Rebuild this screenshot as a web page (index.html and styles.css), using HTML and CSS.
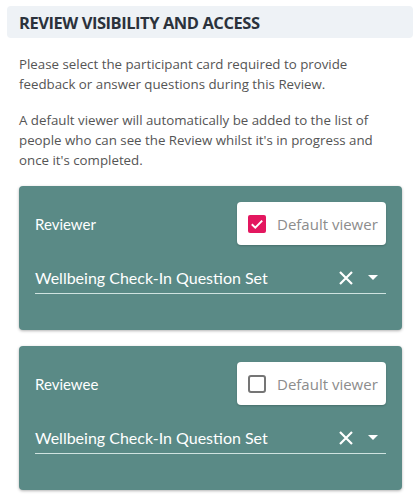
FILE: index.html
```html
<!DOCTYPE html>
<html>
<head>
<meta charset="utf-8">
<link rel="stylesheet" href="styles.css">
</head>
<body>
<div class="header"><h1 class="title">REVIEW VISIBILITY AND ACCESS</h1></div>
<p class="text">Please select the participant card required to provide feedback or answer questions during this Review.</p>
<p class="text">A default viewer will automatically be added to the list of people who can see the Review whilst it's in progress and once it's completed.</p>

<div class="card">
  <div class="row">
    <span class="label">Reviewer</span>
    <label class="dv">
      <svg class="cb" width="18" height="18" viewBox="0 0 18 18"><rect x="0" y="0" width="18" height="18" rx="2" fill="#e3175f"/><path d="M3.8 9.2 L7.3 12.6 L14.2 5.6" fill="none" stroke="#fff" stroke-width="2"/></svg>
      <span class="dv-text">Default viewer</span>
    </label>
  </div>
  <div class="select">
    <span class="value">Wellbeing Check-In Question Set</span>
    <svg class="x" width="14" height="14" viewBox="0 0 14 14"><path d="M1 1 L13 13 M13 1 L1 13" stroke="#fff" stroke-width="2.2" fill="none"/></svg>
    <svg class="arr" width="10" height="5" viewBox="0 0 10 5"><path d="M0 0 L10 0 L5 5 Z" fill="#fff"/></svg>
  </div>
</div>

<div class="card">
  <div class="row">
    <span class="label">Reviewee</span>
    <label class="dv">
      <svg class="cb" width="18" height="18" viewBox="0 0 18 18"><rect x="1" y="1" width="16" height="16" rx="2" fill="none" stroke="#757575" stroke-width="2"/></svg>
      <span class="dv-text">Default viewer</span>
    </label>
  </div>
  <div class="select">
    <span class="value">Wellbeing Check-In Question Set</span>
    <svg class="x" width="14" height="14" viewBox="0 0 14 14"><path d="M1 1 L13 13 M13 1 L1 13" stroke="#fff" stroke-width="2.2" fill="none"/></svg>
    <svg class="arr" width="10" height="5" viewBox="0 0 10 5"><path d="M0 0 L10 0 L5 5 Z" fill="#fff"/></svg>
  </div>
</div>
</body>
</html>
```
FILE: styles.css
```css
html, body { margin: 0; padding: 0; background: #fff; }
body { padding: 6px 5px 20px 7px; font-family: "Open Sans", sans-serif; }
.header {
  background: #eef2f6;
  border-radius: 4px;
  height: 32px;
  display: flex;
  align-items: center;
  padding-left: 12px;
}
.title {
  margin: 0;
  font-family: "Open Sans", sans-serif;
  font-weight: 700;
  font-size: 16.5px;
  color: #2b323c;
  letter-spacing: -0.45px;
}
.text {
  margin: 16px 12px 0 12px;
  font-size: 13.3px;
  line-height: 20px;
  color: #555;
}
.card {
  margin: 16px 11px 0 12px;
  background: #5a8a86;
  border-radius: 4px;
  box-shadow: 0 1px 3px rgba(0,0,0,0.3);
  padding: 16px 16px 36px 16px;
  font-family: Lato, sans-serif;
  color: #fff;
}
.row {
  display: flex;
  justify-content: space-between;
  align-items: center;
  height: 43px;
}
.label { font-size: 15px; }
.dv {
  background: #fff;
  border-radius: 4px;
  height: 43px;
  width: 149px;
  box-sizing: border-box;
  display: flex;
  align-items: center;
  gap: 11px;
  padding-left: 11px;
  box-shadow: 0 1px 2px rgba(0,0,0,0.2);
}
.cb { display: block; }
.dv-text {
  font-family: "Open Sans", sans-serif;
  font-size: 15px;
  color: #8c8c8c;
}
.select {
  margin-top: 17px;
  height: 31px;
  border-bottom: 1px solid #cfe3e0;
  display: flex;
  align-items: center;
}
.value { font-size: 16px; flex: 1; }
.x { margin-right: 15px; }
.arr { margin-right: 8px; }
```
